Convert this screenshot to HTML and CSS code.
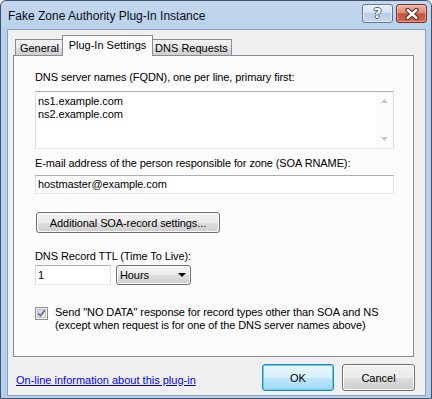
FILE: index.html
```html
<!DOCTYPE html>
<html>
<head>
<meta charset="utf-8">
<link rel="stylesheet" href="styles.css">
</head>
<body>
<div class="window">
  <div class="titlebar">
    <div class="title">Fake Zone Authority Plug-In Instance</div>
    <div class="capbtns">
      <div class="capbtn help"><span class="qmark">?</span></div>
      <div class="capbtn close">
        <svg width="16" height="12" viewBox="0 0 16 12">
          <path d="M3.5 2 L12.5 10 M12.5 2 L3.5 10" fill="none" stroke="#5a2416" stroke-width="4.4" stroke-linecap="round"/>
          <path d="M3.5 2 L12.5 10 M12.5 2 L3.5 10" fill="none" stroke="#ffffff" stroke-width="2.4" stroke-linecap="round"/>
        </svg>
      </div>
    </div>
  </div>
  <div class="client">
    <div class="tabctl">
      <div class="tabs">
        <div class="tab t-general">General</div>
        <div class="tab t-plugin selected">Plug-In Settings</div>
        <div class="tab t-dns">DNS Requests</div>
      </div>
      <div class="panel">
        <div class="label l1">DNS server names (FQDN), one per line, primary first:</div>
        <div class="textarea">
          <div class="ta-text">ns1.example.com<br>ns2.example.com</div>
          <div class="ta-scroll">
            <svg width="7" height="4" viewBox="0 0 7 4"><path d="M0 4 L3.5 0 L7 4 Z" fill="#c2c6cc"/></svg>
            <svg width="7" height="4" viewBox="0 0 7 4"><path d="M0 0 L3.5 4 L7 0 Z" fill="#c2c6cc"/></svg>
          </div>
        </div>
        <div class="label l2">E-mail address of the person responsible for zone (SOA RNAME):</div>
        <div class="input email">hostmaster@example.com</div>
        <div class="button soa">Additional SOA-record settings...</div>
        <div class="label l3">DNS Record TTL (Time To Live):</div>
        <div class="ttlrow">
          <div class="input ttl">1</div>
          <div class="select">
            <span>Hours</span>
            <svg width="8" height="4" viewBox="0 0 8 4"><path d="M0 0 L8 0 L4 4 Z" fill="#000"/></svg>
          </div>
        </div>
        <div class="checkrow">
          <svg class="checkbox" width="13" height="13" viewBox="0 0 13 13">
            <defs>
              <linearGradient id="cbg" x1="0" y1="0" x2="1" y2="1">
                <stop offset="0" stop-color="#cbcfd5"/>
                <stop offset="1" stop-color="#f6f6f6"/>
              </linearGradient>
            </defs>
            <rect x="0.5" y="0.5" width="12" height="12" fill="#f4f4f4" stroke="#8f8f8f"/>
            <rect x="2.5" y="2.5" width="8" height="8" fill="url(#cbg)" stroke="#c0c4ca"/>
            <path d="M3.2 6.3 L5.4 8.8 L9.8 3.4" fill="none" stroke="#5b6f97" stroke-width="1.7"/>
          </svg>
          <div class="checktext">Send "NO DATA" response for record types other than SOA and NS<br>(except when request is for one of the DNS server names above)</div>
        </div>
      </div>
    </div>
    <div class="bottom">
      <a class="link" href="#">On-line information about this plug-in</a>
      <div class="btns">
        <div class="button ok">OK</div>
        <div class="button cancel">Cancel</div>
      </div>
    </div>
  </div>
</div>
</body>
</html>
```

FILE: styles.css
```css
html, body {
  margin: 0;
  padding: 0;
  background: #ffffff;
}
body {
  font-family: "Liberation Sans", Arial, sans-serif;
  font-size: 11px;
  color: #000;
}
.window {
  width: 432px;
  height: 399px;
  box-sizing: border-box;
  border: 1px solid #3f526c;
  border-radius: 6px 6px 0 0;
  background: linear-gradient(to bottom, #c4d8ef 0px, #b9d1ea 28px, #b7cfe9 100%);
  padding: 0 5px 2px 6px;
  display: flex;
  flex-direction: column;
}
.titlebar {
  height: 28px;
  display: flex;
  align-items: flex-start;
  justify-content: space-between;
  padding-left: 1px;
}
.title {
  font-size: 12px;
  line-height: 15px;
  margin-top: 8px;
  color: #0b0b14;
}
.capbtns {
  display: flex;
  gap: 3px;
  margin-top: 3px;
  margin-right: -1px;
}
.capbtn {
  height: 17px;
  box-sizing: content-box;
  border-radius: 3px;
  display: flex;
  align-items: center;
  justify-content: center;
}
.help {
  width: 29px;
  border: 1px solid #5f7797;
  background: linear-gradient(to bottom, #e8f0f9 0%, #d6e3f2 45%, #bccfe6 50%, #c6d8ee 100%);
  box-shadow: inset 0 0 0 1px rgba(255,255,255,0.5);
}
.qmark {
  font-family: "DejaVu Sans", sans-serif;
  font-size: 14px;
  font-weight: bold;
  color: #ffffff;
  text-shadow: -1px 0 #4a5e7c, 1px 0 #4a5e7c, 0 -1px #4a5e7c, 0 1px #4a5e7c;
  line-height: 17px;
}
.close {
  width: 29px;
  border: 1px solid #6e3427;
  background: linear-gradient(to bottom, #eab2a2 0%, #dd8b74 45%, #c9523a 52%, #d36a4d 100%);
  box-shadow: inset 0 0 0 1px rgba(255,220,210,0.45);
}
.client {
  flex: 1;
  border: 1px solid #8ba2bf;
  background: #f0f0f0;
  display: flex;
  flex-direction: column;
}
.tabctl {
  margin: 5px 0 0 5px;
  width: 401px;
}
.tabs {
  display: flex;
  align-items: flex-end;
  height: 20px;
  padding-left: 2px;
  position: relative;
  z-index: 1;
}
.tab {
  box-sizing: border-box;
  height: 16px;
  border: 1px solid #898c95;
  border-bottom: none;
  background: linear-gradient(to bottom, #f2f2f2 0%, #ebebeb 50%, #dddddd 51%, #cfcfcf 100%);
  text-align: center;
  line-height: 14px;
  padding-top: 1px;
}
.t-general { width: 49px; }
.t-dns { width: 81px; }
.tab.selected {
  position: relative;
  z-index: 2;
  width: 91px;
  height: 21px;
  margin: 0 -2px -1px -2px;
  background: #fcfcfc;
  padding-top: 2px;
}
.panel {
  box-sizing: border-box;
  height: 302px;
  border: 1px solid #898c95;
  background: #fcfcfc;
  padding: 15px 0 0 21px;
  display: flex;
  flex-direction: column;
  align-items: flex-start;
  letter-spacing: -0.1px;
}
.label {
  line-height: 13px;
  white-space: nowrap;
}
.textarea {
  box-sizing: border-box;
  margin-top: 7px;
  width: 359px;
  height: 58px;
  border: 1px solid #abadb3;
  border-left-color: #dbdfe6;
  border-right-color: #dbdfe6;
  border-bottom-color: #e3e9ef;
  background: #ffffff;
  display: flex;
}
.ta-text {
  flex: 1;
  padding: 3px 0 0 2px;
  line-height: 13px;
}
.ta-scroll {
  width: 17px;
  display: flex;
  flex-direction: column;
  justify-content: space-between;
  align-items: center;
  padding: 7px 0 7px 0;
  box-sizing: border-box;
  background: #fbfbfb;
}
.ta-scroll svg { display: block; }
.l2 { margin-top: 8px; }
.input {
  box-sizing: border-box;
  border: 1px solid #abadb3;
  border-left-color: #dbdfe6;
  border-right-color: #dbdfe6;
  border-bottom-color: #e3e9ef;
  background: #ffffff;
  line-height: 13px;
  padding: 2px 0 0 2px;
}
.email {
  margin-top: 5px;
  width: 359px;
  height: 19px;
}
.button {
  box-sizing: border-box;
  border: 1px solid #707070;
  border-radius: 3px;
  background: linear-gradient(to bottom, #f2f2f2 0%, #ebebeb 50%, #dddddd 51%, #cfcfcf 100%);
  box-shadow: inset 0 0 0 1px #fcfcfc;
  text-align: center;
  display: flex;
  align-items: center;
  justify-content: center;
}
.soa {
  margin-top: 18px;
  margin-left: 1px;
  width: 184px;
  height: 21px;
}
.l3 { margin-top: 17px; }
.ttlrow {
  display: flex;
  gap: 5px;
  margin-top: 2px;
}
.ttl {
  width: 76px;
  height: 20px;
  padding-top: 3px;
}
.select {
  box-sizing: border-box;
  width: 75px;
  height: 20px;
  border: 1px solid #707070;
  border-radius: 3px;
  background: linear-gradient(to bottom, #f2f2f2 0%, #ebebeb 50%, #dddddd 51%, #cfcfcf 100%);
  box-shadow: inset 0 0 0 1px #fcfcfc;
  display: flex;
  align-items: center;
  justify-content: space-between;
  padding: 0 4px 0 3px;
}
.select svg { display: block; }
.checkrow {
  display: flex;
  align-items: flex-start;
  margin-top: 21px;
}
.checkbox {
  display: block;
  margin-top: 1px;
  flex: none;
}
.checktext {
  margin-left: 7px;
  line-height: 13px;
}
.bottom {
  display: flex;
  align-items: center;
  justify-content: space-between;
  margin: 7px 10px 0 8px;
}
.link {
  color: #0000ff;
  text-decoration: underline;
  line-height: 13px;
  margin-top: 5px;
}
.btns {
  display: flex;
  gap: 8px;
}
.ok, .cancel {
  height: 27px;
}
.ok {
  width: 72px;
  border-color: #3c7fb1;
  box-shadow: inset 0 0 0 1px #48d8fb;
  background: linear-gradient(to bottom, #eaf6fd 0%, #d9f0fc 50%, #bee6fd 51%, #a7d9f5 100%);
}
.cancel {
  width: 73px;
}
```
